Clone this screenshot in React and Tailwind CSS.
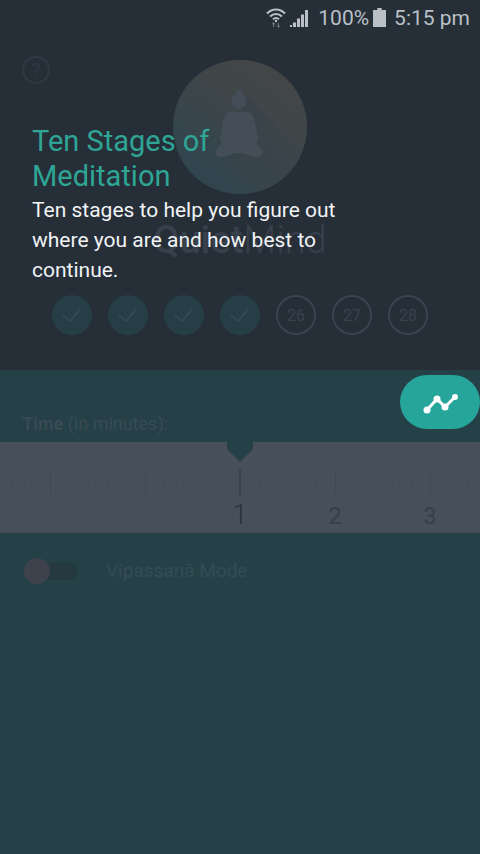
import React, { useState } from 'react';

const DAYS = [
	{ day: 22, done: true },
	{ day: 23, done: true },
	{ day: 24, done: true },
	{ day: 25, done: true },
	{ day: 26, done: false },
	{ day: 27, done: false },
	{ day: 28, done: false },
];

// How far each ruler segment is from the selected minute
const OFFSETS = [-3, -2, -1, 0, 1, 2, 3];
const TICKS = [0, 1, 2, 3, 4];

function StatusBar() {
	return (
		<div className="h-9 flex items-center justify-end pr-[10px] text-[21px] text-[#b9c0c6]">
			<svg className="w-5 h-5 mr-1" viewBox="0 0 20 20" fill="none" stroke="currentColor" strokeWidth="2">
				<path d="M1 5.5C6 0 14 0 19 5.5M4 8.5c3.500-3.500 8.500-3.500 12 0M7 11.300c2-1.800 4-1.800 6 0" />
				<circle cx="10" cy="13" r="1.200" fill="currentColor" stroke="none" />
				<path d="M7.500 19v-4M6 16.500l1.500-1.800 1.500 1.800M12.500 15v4M11 17.500l1.500 1.800 1.500-1.800" strokeWidth="1" opacity="0.5" />
			</svg>
			<svg className="w-5 h-5 mr-2" viewBox="0 0 20 20" fill="currentColor">
				<path d="M0 17h2v2H0zM3 14.500h3V19H3zM7 10.500h3V19H7zM11 6.500h3V19h-3zM15 2h3v17h-3z" />
			</svg>
			<span className="pt-[2px]">100%</span>
			<svg className="w-[13px] h-5 ml-1 mr-2" viewBox="0 0 12 20" preserveAspectRatio="none" fill="currentColor">
				<path d="M4 0h4v2h4v17H0V2h4z" />
			</svg>
			<span className="pt-[2px]">5:15 pm</span>
		</div>
	);
}

function Logo() {
	return (
		<svg className="w-[134px] h-[134px]" viewBox="0 0 134 134">
			<defs>
				<linearGradient id="disc" x1="0.8" y1="0.1" x2="0.25" y2="0.9">
					<stop offset="0" stopColor="#434646" />
					<stop offset="0.45" stopColor="#3d4649" />
					<stop offset="1" stopColor="#31454f" />
				</linearGradient>
				<linearGradient id="shade" x1="0" y1="0" x2="1" y2="1">
					<stop offset="0" stopColor="#384249" />
					<stop offset="1" stopColor="#384249" stopOpacity="0.2" />
				</linearGradient>
				<clipPath id="round">
					<circle cx="67" cy="67" r="67" />
				</clipPath>
			</defs>
			<circle cx="67" cy="67" r="67" fill="url(#disc)" />
			<path clipPath="url(#round)" d="M71 34l63 63v37H84L46 96l20-30z" fill="url(#shade)" />
			<g fill="#444e58">
				<circle cx="66" cy="41" r="7.500" />
				<circle cx="66" cy="32.500" r="3" />
				<path d="M57 52h18c4 1 6 5 7 11l3 15c0 3-1 4-2 5l5 6c3 4 1 8-4 8-7 0-10-4-18-4s-11 4-18 4c-5 0-7-4-4-8l5-6c-1-1-2-2-2-5l3-15c1-6 3-10 7-11z" />
			</g>
		</svg>
	);
}

function DayCircle({ day, done }) {
	if (done) {
		return (
			<div className="w-10 h-10 rounded-full bg-[#263f47] flex items-center justify-center">
				<svg className="w-6 h-6" viewBox="0 0 24 24" fill="none" stroke="#384e57" strokeWidth="1.5">
					<path d="M3 12l7 6L20 6" />
				</svg>
			</div>
		);
	}
	return (
		<div className="w-10 h-10 rounded-full border-2 border-[#3a424d] flex items-center justify-center pt-px text-base text-[#3a424d]">{day}</div>
	);
}

function Ruler({ minutes, onChange }) {
	return (
		<div className="relative h-[91px] bg-[#474f5a] flex justify-center overflow-hidden">
			{OFFSETS.map((offset) => {
				const value = minutes + offset;
				const selected = offset === 0;
				return (
					<div key={offset} className="w-[95px] shrink-0 pt-[27px]">
						<div className="flex items-center h-7">
							{TICKS.map((tick) => (
								<div key={tick} className="w-[19px] flex justify-center">
									{tick === 2 ? (
										<div className={selected ? 'w-[2px] h-7 bg-[#38414c]' : 'w-px h-6 bg-[#404954]'} />
									) : (
										<div className="w-px h-3 bg-[#434c57]" />
									)}
								</div>
							))}
						</div>
						{value > 0 && Math.abs(offset) < 3 && (
							<div className={selected ? 'pt-px text-center text-[27px] leading-[34px] font-light text-[#29323d]' : 'pt-[2px] text-center text-2xl leading-[34px] text-[#363f4a]'}>
								{value}
							</div>
						)}
					</div>
				);
			})}
			<svg className="absolute top-0 left-1/2 -translate-x-1/2 w-[26px] h-5" viewBox="0 0 26 20" fill="#264047">
				<path d="M0 0h26v7L13 20 0 7z" />
			</svg>
			<input
				id="minutes"
				type="range"
				min="1"
				max="60"
				value={minutes}
				onChange={(e) => onChange(Number(e.target.value))}
				className="absolute inset-0 w-full h-full opacity-0 cursor-pointer"
			/>
		</div>
	);
}

function App() {
	const [minutes, setMinutes] = useState(1);
	const [vipassana, setVipassana] = useState(false);

	return (
		<div className="relative min-h-screen flex flex-col bg-[#264047] font-['Roboto',sans-serif]">
			<header className="bg-[#262e38] pb-[35px]">
				<StatusBar />
				<div className="flex items-start justify-center px-[22px] pt-5">
					<div className="flex-1">
						<button type="button" aria-label="Help" className="block w-7 h-7 rounded-full border-2 border-[#303842] text-lg leading-6 text-[#303842]">
							?
						</button>
					</div>
					<div className="pt-1">
						<Logo />
					</div>
					<div className="flex-1" />
				</div>
				<h1 className="pt-[23px] text-center text-[38px] leading-[46px] font-light text-[#38404b]">
					<span className="font-medium">Quiet</span>Mind
				</h1>
				<div className="flex justify-center gap-4 pt-8">
					{DAYS.map((item) => (
						<DayCircle key={item.day} day={item.day} done={item.done} />
					))}
				</div>
			</header>

			<main>
				<div className="flex justify-end pt-[5px]">
					<button type="button" aria-label="Ten Stages of Meditation" className="w-20 h-[54px] rounded-full bg-[#26a69a] flex items-center justify-center">
						<svg className="w-9 h-6" viewBox="0 0 36 24" fill="none" stroke="white" strokeWidth="3">
							<path d="M5 20L15 9l8 8L33 7" />
							<g fill="white" stroke="none">
								<circle cx="5" cy="20" r="3.500" />
								<circle cx="15" cy="9" r="3.500" />
								<circle cx="23" cy="17" r="3.500" />
								<circle cx="33" cy="7" r="3" />
							</g>
						</svg>
					</button>
				</div>
				{/* the label tucks up beside the button */}
				<label htmlFor="minutes" className="block -mt-[17px] px-[22px] pb-[6px] text-lg leading-6 text-[#384b55]">
					<span className="font-bold">Time</span> (in minutes):
				</label>
				<Ruler minutes={minutes} onChange={setMinutes} />
				<label className="flex items-center gap-[26px] px-6 pt-6 text-[19px] text-[#344c56]">
					<input type="checkbox" className="peer sr-only" checked={vipassana} onChange={(e) => setVipassana(e.target.checked)} />
					<span className={vipassana ? 'w-14 h-[26px] flex flex-row-reverse items-center' : 'w-14 h-[26px] flex items-center'}>
						<span className="relative z-10 w-[26px] h-[26px] shrink-0 rounded-full bg-[#3d424c]" />
						<span className="-mx-2 w-9 h-[18px] rounded-full bg-[#253940]" />
					</span>
					Vipassanā Mode
				</label>
			</main>

			{/* Coach mark text on top of the dimmed screen */}
			<section className="absolute top-[124px] left-8 w-80">
				<h2 className="text-[29px] leading-[35px] text-[#2fa596]">Ten Stages of Meditation</h2>
				<p className="pt-px text-[21px] leading-[30px] text-[#f1f3f5]">Ten stages to help you figure out where you are and how best to continue.</p>
			</section>
		</div>
	);
}

export default App;
